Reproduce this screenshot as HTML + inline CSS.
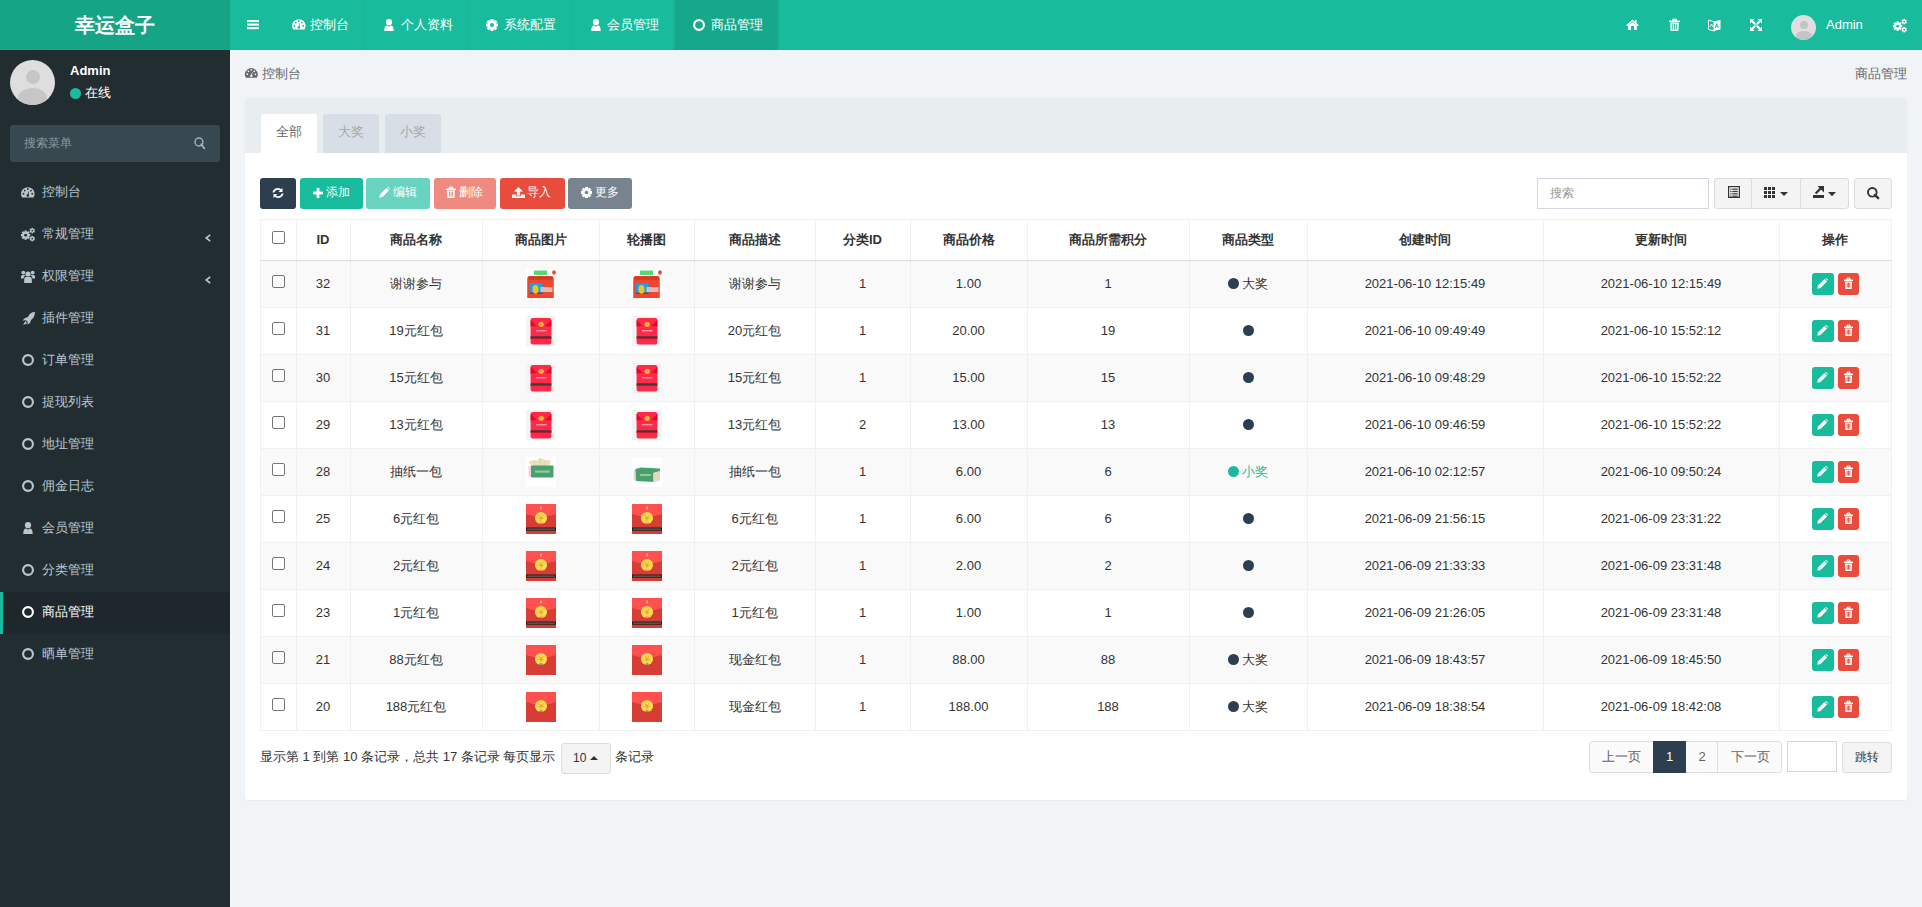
<!DOCTYPE html>
<html><head><meta charset="utf-8"><style>
*{box-sizing:border-box;margin:0;padding:0}
html,body{width:1922px;height:907px;overflow:hidden}
body{font-family:"Liberation Sans",sans-serif;font-size:13px;color:#333;background:#f1f4f6;position:relative}
.abs{position:absolute}
.t{white-space:nowrap}
svg{display:block;overflow:visible}
.cb{width:13px;height:13px;border:1px solid #767676;border-radius:2px;background:#fff}
.img{width:30px;height:30px}
</style></head><body>
<div class="abs" style="left:0;top:0;width:230px;height:50px;background:#16a487"></div>
<div class="abs" style="left:0;top:0;width:230px;height:50px;line-height:50px;text-align:center;color:#fff;font-size:20px;font-weight:bold">幸运盒子</div>
<div class="abs" style="left:230px;top:0;width:1692px;height:50px;background:#18bc9c"></div>
<svg class="abs" style="left:247px;top:20px" width="12" height="9.2" viewBox="0 0 12 9.2"><rect x="0" y="0" width="12" height="2.1" fill="#fff"/><rect x="0" y="3.55" width="12" height="2.1" fill="#fff"/><rect x="0" y="7.1" width="12" height="2.1" fill="#fff"/></svg>
<div class="abs" style="left:364px;top:0;width:1px;height:50px;background:#17b194"></div>
<div class="abs" style="left:468px;top:0;width:1px;height:50px;background:#17b194"></div>
<div class="abs" style="left:571px;top:0;width:1px;height:50px;background:#17b194"></div>
<div class="abs" style="left:674px;top:0;width:1px;height:50px;background:#17b194"></div>
<div class="abs" style="left:778px;top:0;width:1px;height:50px;background:#17b194"></div>
<div class="abs" style="left:675px;top:0;width:103px;height:50px;background:#17a88b"></div>
<svg class="abs" style="left:291.5px;top:19.4px" width="14" height="11" viewBox="0 0 14 11"><g transform="scale(1.0)"><path d="M1.03 10.6 A6.8 6.8 0 1 1 12.57 10.6 Z" fill="#fff"/><circle cx="2.5" cy="6.7" r="0.95" fill="#18bc9c"/><circle cx="3.7" cy="3.6" r="0.95" fill="#18bc9c"/><circle cx="6.8" cy="2" r="0.95" fill="#18bc9c"/><circle cx="9.9" cy="3.6" r="0.95" fill="#18bc9c"/><circle cx="11.2" cy="6.8" r="0.95" fill="#18bc9c"/><path d="M6.3 8.4 L7.6 4.2 L8.1 4.3 L7.4 8.6 Z" fill="#18bc9c"/><circle cx="6.8" cy="8.5" r="1.3" fill="#18bc9c"/></g></svg>
<div class="abs t" style="left:310px;top:0px;line-height:50px;color:#fff">控制台</div>
<svg class="abs" style="left:384px;top:19px" width="10" height="12" viewBox="0 0 10 12"><circle cx="5.0" cy="3.2" r="3.1" fill="#fff"/><path d="M0.3 12 C0.3 8 1.5 6.8 3.2 6.6 Q5.0 8.6 6.8 6.6 C8.5 6.8 9.7 8 9.7 12 Z" fill="#fff"/></svg>
<div class="abs t" style="left:401px;top:0px;line-height:50px;color:#fff">个人资料</div>
<svg class="abs" style="left:486px;top:19px" width="12" height="12" viewBox="0 0 12 12"><rect x="4.5" y="0.0" width="3" height="3" fill="#fff" transform="rotate(0 6.0 6.0)"/><rect x="4.5" y="0.0" width="3" height="3" fill="#fff" transform="rotate(45 6.0 6.0)"/><rect x="4.5" y="0.0" width="3" height="3" fill="#fff" transform="rotate(90 6.0 6.0)"/><rect x="4.5" y="0.0" width="3" height="3" fill="#fff" transform="rotate(135 6.0 6.0)"/><rect x="4.5" y="0.0" width="3" height="3" fill="#fff" transform="rotate(180 6.0 6.0)"/><rect x="4.5" y="0.0" width="3" height="3" fill="#fff" transform="rotate(225 6.0 6.0)"/><rect x="4.5" y="0.0" width="3" height="3" fill="#fff" transform="rotate(270 6.0 6.0)"/><rect x="4.5" y="0.0" width="3" height="3" fill="#fff" transform="rotate(315 6.0 6.0)"/><circle cx="6.0" cy="6.0" r="4.4" fill="#fff"/><circle cx="6.0" cy="6.0" r="2.0" fill="#18bc9c"/></svg>
<div class="abs t" style="left:504px;top:0px;line-height:50px;color:#fff">系统配置</div>
<svg class="abs" style="left:591px;top:19px" width="10" height="12" viewBox="0 0 10 12"><circle cx="5.0" cy="3.2" r="3.1" fill="#fff"/><path d="M0.3 12 C0.3 8 1.5 6.8 3.2 6.6 Q5.0 8.6 6.8 6.6 C8.5 6.8 9.7 8 9.7 12 Z" fill="#fff"/></svg>
<div class="abs t" style="left:607px;top:0px;line-height:50px;color:#fff">会员管理</div>
<svg class="abs" style="left:693px;top:19px" width="12" height="12" viewBox="0 0 12 12"><circle cx="6.0" cy="6.0" r="4.9" fill="none" stroke="#fff" stroke-width="2.1"/></svg>
<div class="abs t" style="left:711px;top:0px;line-height:50px;color:#fff">商品管理</div>
<svg class="abs" style="left:1626px;top:19px" width="13" height="11" viewBox="0 0 13 11"><path d="M6.5 0.5 L0.3 6.2 L1.3 7.2 L6.5 2.3 L11.7 7.2 L12.7 6.2 L10.5 4.3 L10.5 1 L9 1 L9 3 Z" fill="#fff"/><path d="M2.2 6.5 L6.5 2.9 L10.8 6.5 L10.8 11 L8.0 11 L8.0 7 L5.0 7 L5.0 11 L2.2 11 Z" fill="#fff"/></svg>
<svg class="abs" style="left:1669px;top:19px" width="11" height="12" viewBox="0 0 11 12"><path d="M3.52 1.5 Q3.52 0 4.95 0 L6.050000000000001 0 Q7.48 0 7.48 1.5 Z" fill="none" stroke="#fff" stroke-width="1.2"/><rect x="0" y="1.6" width="11" height="1.4" fill="#fff"/><path d="M1.1 3.4 L9.9 3.4 L9.35 12 L1.65 12 Z" fill="#fff"/><rect x="3.3" y="4.6" width="0.9" height="6" fill="#18bc9c"/><rect x="5.05" y="4.6" width="0.9" height="6" fill="#18bc9c"/><rect x="6.799999999999999" y="4.6" width="0.9" height="6" fill="#18bc9c"/></svg>
<svg class="abs" style="left:1708px;top:19px" width="13" height="13" viewBox="0 0 13 13"><path d="M0.5 1 L6.5 3 L6.5 12 L0.5 10.5 Z" fill="none" stroke="#fff" stroke-width="1"/><path d="M5.5 2.5 L12.5 1 L12.5 10.5 L5.5 12 Z" fill="#fff"/><path d="M2 8 L3.5 5 L5 8" fill="none" stroke="#fff" stroke-width="0.9"/><path d="M7.3 9 L8.8 4.5 L10.3 9 M7.9 7.5 L9.7 7.5" fill="none" stroke="#18bc9c" stroke-width="0.9"/></svg>
<svg class="abs" style="left:1750px;top:19px" width="12" height="12" viewBox="0 0 12 12"><path d="M0 0 L4.5 0 L3 1.5 L5.5 4 L4 5.5 L1.5 3 L0 4.5 Z" fill="#fff"/><path d="M12 0 L7.5 0 L9 1.5 L6.5 4 L8 5.5 L10.5 3 L12 4.5 Z" fill="#fff"/><path d="M0 12 L4.5 12 L3 10.5 L5.5 8 L4 6.5 L1.5 9 L0 7.5 Z" fill="#fff"/><path d="M12 12 L7.5 12 L9 10.5 L6.5 8 L8 6.5 L10.5 9 L12 7.5 Z" fill="#fff"/><path d="M3.5 2.5 L9.5 8.5 L8.5 9.5 L2.5 3.5 Z M8.5 2.5 L2.5 8.5 L3.5 9.5 L9.5 3.5 Z" fill="#fff"/></svg>
<div class="abs" style="left:1791px;top:15px;width:25px;height:25px;border-radius:50%;background:#e0dede;overflow:hidden"><div class="abs" style="left:8.5px;top:6px;width:8px;height:8px;border-radius:50%;background:#c4c4c4"></div><div class="abs" style="left:4.5px;top:16px;width:16px;height:10px;border-radius:50%;background:#c4c4c4"></div></div>
<div class="abs t" style="left:1826px;top:0px;line-height:50px;color:#fff">Admin</div>
<svg class="abs" style="left:1893px;top:19px" width="14" height="13" viewBox="0 0 14 13"><rect x="3.52" y="2.4700000000000006" width="2.2" height="2.64" fill="#fff" transform="rotate(0.0 4.62 7.15)"/><rect x="3.52" y="2.4700000000000006" width="2.2" height="2.64" fill="#fff" transform="rotate(45.0 4.62 7.15)"/><rect x="3.52" y="2.4700000000000006" width="2.2" height="2.64" fill="#fff" transform="rotate(90.0 4.62 7.15)"/><rect x="3.52" y="2.4700000000000006" width="2.2" height="2.64" fill="#fff" transform="rotate(135.0 4.62 7.15)"/><rect x="3.52" y="2.4700000000000006" width="2.2" height="2.64" fill="#fff" transform="rotate(180.0 4.62 7.15)"/><rect x="3.52" y="2.4700000000000006" width="2.2" height="2.64" fill="#fff" transform="rotate(225.0 4.62 7.15)"/><rect x="3.52" y="2.4700000000000006" width="2.2" height="2.64" fill="#fff" transform="rotate(270.0 4.62 7.15)"/><rect x="3.52" y="2.4700000000000006" width="2.2" height="2.64" fill="#fff" transform="rotate(315.0 4.62 7.15)"/><circle cx="4.62" cy="7.15" r="3.36" fill="#fff"/><circle cx="4.62" cy="7.15" r="1.4000000000000001" fill="#18bc9c"/><rect x="10.4" y="-0.17999999999999994" width="1.6" height="1.92" fill="#fff" transform="rotate(0.0 11.200000000000001 2.6)"/><rect x="10.4" y="-0.17999999999999994" width="1.6" height="1.92" fill="#fff" transform="rotate(60.0 11.200000000000001 2.6)"/><rect x="10.4" y="-0.17999999999999994" width="1.6" height="1.92" fill="#fff" transform="rotate(120.0 11.200000000000001 2.6)"/><rect x="10.4" y="-0.17999999999999994" width="1.6" height="1.92" fill="#fff" transform="rotate(180.0 11.200000000000001 2.6)"/><rect x="10.4" y="-0.17999999999999994" width="1.6" height="1.92" fill="#fff" transform="rotate(240.0 11.200000000000001 2.6)"/><rect x="10.4" y="-0.17999999999999994" width="1.6" height="1.92" fill="#fff" transform="rotate(300.0 11.200000000000001 2.6)"/><circle cx="11.200000000000001" cy="2.6" r="1.82" fill="#fff"/><circle cx="11.200000000000001" cy="2.6" r="0.84" fill="#18bc9c"/><rect x="10.4" y="7.88" width="1.6" height="1.92" fill="#fff" transform="rotate(0.0 11.200000000000001 10.66)"/><rect x="10.4" y="7.88" width="1.6" height="1.92" fill="#fff" transform="rotate(60.0 11.200000000000001 10.66)"/><rect x="10.4" y="7.88" width="1.6" height="1.92" fill="#fff" transform="rotate(120.0 11.200000000000001 10.66)"/><rect x="10.4" y="7.88" width="1.6" height="1.92" fill="#fff" transform="rotate(180.0 11.200000000000001 10.66)"/><rect x="10.4" y="7.88" width="1.6" height="1.92" fill="#fff" transform="rotate(240.0 11.200000000000001 10.66)"/><rect x="10.4" y="7.88" width="1.6" height="1.92" fill="#fff" transform="rotate(300.0 11.200000000000001 10.66)"/><circle cx="11.200000000000001" cy="10.66" r="1.82" fill="#fff"/><circle cx="11.200000000000001" cy="10.66" r="0.84" fill="#18bc9c"/></svg>
<div class="abs" style="left:0;top:50px;width:230px;height:857px;background:#222d32"></div>
<div class="abs" style="left:10px;top:60px;width:45px;height:45px;border-radius:50%;background:#dedede;overflow:hidden"><div class="abs" style="left:15.5px;top:10px;width:14px;height:14px;border-radius:50%;background:#c6c6c6"></div><div class="abs" style="left:8px;top:28px;width:29px;height:20px;border-radius:50%;background:#c6c6c6"></div></div>
<div class="abs t" style="left:70px;top:62px;font-weight:bold;color:#fff;line-height:18px">Admin</div>
<div class="abs" style="left:70px;top:88px;width:11px;height:11px;border-radius:50%;background:#18bc9c"></div>
<div class="abs t" style="left:85px;top:84px;color:#fff;line-height:18px">在线</div>
<div class="abs" style="left:10px;top:125px;width:210px;height:37px;border-radius:3px;background:#374850"></div>
<div class="abs t" style="left:24px;top:134px;color:#8a9aa2;font-size:12px;line-height:18px">搜索菜单</div>
<svg class="abs" style="left:194px;top:137px" width="11" height="12" viewBox="0 0 11 12"><circle cx="4.96" cy="4.96" r="3.96" fill="none" stroke="#a4b0b6" stroke-width="1.5"/><path d="M7.336 7.336 L10.2 11.2" stroke="#a4b0b6" stroke-width="1.9" stroke-linecap="round"/></svg>
<svg class="abs" style="left:21.0px;top:186.5px" width="14" height="11" viewBox="0 0 14 11"><g transform="scale(1.0)"><path d="M1.03 10.6 A6.8 6.8 0 1 1 12.57 10.6 Z" fill="#b8c7ce"/><circle cx="2.5" cy="6.7" r="0.95" fill="#222d32"/><circle cx="3.7" cy="3.6" r="0.95" fill="#222d32"/><circle cx="6.8" cy="2" r="0.95" fill="#222d32"/><circle cx="9.9" cy="3.6" r="0.95" fill="#222d32"/><circle cx="11.2" cy="6.8" r="0.95" fill="#222d32"/><path d="M6.3 8.4 L7.6 4.2 L8.1 4.3 L7.4 8.6 Z" fill="#222d32"/><circle cx="6.8" cy="8.5" r="1.3" fill="#222d32"/></g></svg>
<div class="abs t" style="left:42px;top:171px;line-height:42px;color:#b8c7ce">控制台</div>
<svg class="abs" style="left:21.0px;top:227.5px" width="14" height="13" viewBox="0 0 14 13"><rect x="3.52" y="2.4700000000000006" width="2.2" height="2.64" fill="#b8c7ce" transform="rotate(0.0 4.62 7.15)"/><rect x="3.52" y="2.4700000000000006" width="2.2" height="2.64" fill="#b8c7ce" transform="rotate(45.0 4.62 7.15)"/><rect x="3.52" y="2.4700000000000006" width="2.2" height="2.64" fill="#b8c7ce" transform="rotate(90.0 4.62 7.15)"/><rect x="3.52" y="2.4700000000000006" width="2.2" height="2.64" fill="#b8c7ce" transform="rotate(135.0 4.62 7.15)"/><rect x="3.52" y="2.4700000000000006" width="2.2" height="2.64" fill="#b8c7ce" transform="rotate(180.0 4.62 7.15)"/><rect x="3.52" y="2.4700000000000006" width="2.2" height="2.64" fill="#b8c7ce" transform="rotate(225.0 4.62 7.15)"/><rect x="3.52" y="2.4700000000000006" width="2.2" height="2.64" fill="#b8c7ce" transform="rotate(270.0 4.62 7.15)"/><rect x="3.52" y="2.4700000000000006" width="2.2" height="2.64" fill="#b8c7ce" transform="rotate(315.0 4.62 7.15)"/><circle cx="4.62" cy="7.15" r="3.36" fill="#b8c7ce"/><circle cx="4.62" cy="7.15" r="1.4000000000000001" fill="#222d32"/><rect x="10.4" y="-0.17999999999999994" width="1.6" height="1.92" fill="#b8c7ce" transform="rotate(0.0 11.200000000000001 2.6)"/><rect x="10.4" y="-0.17999999999999994" width="1.6" height="1.92" fill="#b8c7ce" transform="rotate(60.0 11.200000000000001 2.6)"/><rect x="10.4" y="-0.17999999999999994" width="1.6" height="1.92" fill="#b8c7ce" transform="rotate(120.0 11.200000000000001 2.6)"/><rect x="10.4" y="-0.17999999999999994" width="1.6" height="1.92" fill="#b8c7ce" transform="rotate(180.0 11.200000000000001 2.6)"/><rect x="10.4" y="-0.17999999999999994" width="1.6" height="1.92" fill="#b8c7ce" transform="rotate(240.0 11.200000000000001 2.6)"/><rect x="10.4" y="-0.17999999999999994" width="1.6" height="1.92" fill="#b8c7ce" transform="rotate(300.0 11.200000000000001 2.6)"/><circle cx="11.200000000000001" cy="2.6" r="1.82" fill="#b8c7ce"/><circle cx="11.200000000000001" cy="2.6" r="0.84" fill="#222d32"/><rect x="10.4" y="7.88" width="1.6" height="1.92" fill="#b8c7ce" transform="rotate(0.0 11.200000000000001 10.66)"/><rect x="10.4" y="7.88" width="1.6" height="1.92" fill="#b8c7ce" transform="rotate(60.0 11.200000000000001 10.66)"/><rect x="10.4" y="7.88" width="1.6" height="1.92" fill="#b8c7ce" transform="rotate(120.0 11.200000000000001 10.66)"/><rect x="10.4" y="7.88" width="1.6" height="1.92" fill="#b8c7ce" transform="rotate(180.0 11.200000000000001 10.66)"/><rect x="10.4" y="7.88" width="1.6" height="1.92" fill="#b8c7ce" transform="rotate(240.0 11.200000000000001 10.66)"/><rect x="10.4" y="7.88" width="1.6" height="1.92" fill="#b8c7ce" transform="rotate(300.0 11.200000000000001 10.66)"/><circle cx="11.200000000000001" cy="10.66" r="1.82" fill="#b8c7ce"/><circle cx="11.200000000000001" cy="10.66" r="0.84" fill="#222d32"/></svg>
<div class="abs t" style="left:42px;top:213px;line-height:42px;color:#b8c7ce">常规管理</div>
<svg class="abs" style="left:205px;top:233.5px" width="6" height="8" viewBox="0 0 6 8"><path d="M5.2 0.8 L1.2 4.0 L5.2 7.2" fill="none" stroke="#b8c7ce" stroke-width="1.7"/></svg>
<svg class="abs" style="left:21.0px;top:269.5px" width="14" height="13" viewBox="0 0 14 13"><circle cx="7.0" cy="4" r="2.6" fill="#b8c7ce"/><path d="M3.2 13 L3.2 9 Q3.2 7 5 7 L9 7 Q10.8 7 10.8 9 L10.8 13 Z" fill="#b8c7ce"/><circle cx="2.3" cy="2.6" r="1.9" fill="#b8c7ce"/><circle cx="11.7" cy="2.6" r="1.9" fill="#b8c7ce"/><path d="M0 8.5 L0 6.5 Q0 5 1.5 5 L4.5 5 L3 6.8 L2.5 8.5 Z" fill="#b8c7ce"/><path d="M14 8.5 L14 6.5 Q14 5 12.5 5 L9.5 5 L11 6.8 L11.5 8.5 Z" fill="#b8c7ce"/></svg>
<div class="abs t" style="left:42px;top:255px;line-height:42px;color:#b8c7ce">权限管理</div>
<svg class="abs" style="left:205px;top:275.5px" width="6" height="8" viewBox="0 0 6 8"><path d="M5.2 0.8 L1.2 4.0 L5.2 7.2" fill="none" stroke="#b8c7ce" stroke-width="1.7"/></svg>
<svg class="abs" style="left:21.5px;top:311.5px" width="13" height="13" viewBox="0 0 13 13"><path d="M13 0 Q8 0 6 5 L3 6 L0.5 8.5 L4 8.3 L5.7 10 L5.5 12.5 L8 11 L9 8 Q13 5 13 0 Z" fill="#b8c7ce"/><path d="M3.5 9 L1 13 L5 11.5 Z" fill="#b8c7ce"/></svg>
<div class="abs t" style="left:42px;top:297px;line-height:42px;color:#b8c7ce">插件管理</div>
<svg class="abs" style="left:22.0px;top:354.0px" width="12" height="12" viewBox="0 0 12 12"><circle cx="6.0" cy="6.0" r="4.9" fill="none" stroke="#b8c7ce" stroke-width="2.1"/></svg>
<div class="abs t" style="left:42px;top:339px;line-height:42px;color:#b8c7ce">订单管理</div>
<svg class="abs" style="left:22.0px;top:396.0px" width="12" height="12" viewBox="0 0 12 12"><circle cx="6.0" cy="6.0" r="4.9" fill="none" stroke="#b8c7ce" stroke-width="2.1"/></svg>
<div class="abs t" style="left:42px;top:381px;line-height:42px;color:#b8c7ce">提现列表</div>
<svg class="abs" style="left:22.0px;top:438.0px" width="12" height="12" viewBox="0 0 12 12"><circle cx="6.0" cy="6.0" r="4.9" fill="none" stroke="#b8c7ce" stroke-width="2.1"/></svg>
<div class="abs t" style="left:42px;top:423px;line-height:42px;color:#b8c7ce">地址管理</div>
<svg class="abs" style="left:22.0px;top:480.0px" width="12" height="12" viewBox="0 0 12 12"><circle cx="6.0" cy="6.0" r="4.9" fill="none" stroke="#b8c7ce" stroke-width="2.1"/></svg>
<div class="abs t" style="left:42px;top:465px;line-height:42px;color:#b8c7ce">佣金日志</div>
<svg class="abs" style="left:23.0px;top:522.0px" width="10" height="12" viewBox="0 0 10 12"><circle cx="5.0" cy="3.2" r="3.1" fill="#b8c7ce"/><path d="M0.3 12 C0.3 8 1.5 6.8 3.2 6.6 Q5.0 8.6 6.8 6.6 C8.5 6.8 9.7 8 9.7 12 Z" fill="#b8c7ce"/></svg>
<div class="abs t" style="left:42px;top:507px;line-height:42px;color:#b8c7ce">会员管理</div>
<svg class="abs" style="left:22.0px;top:564.0px" width="12" height="12" viewBox="0 0 12 12"><circle cx="6.0" cy="6.0" r="4.9" fill="none" stroke="#b8c7ce" stroke-width="2.1"/></svg>
<div class="abs t" style="left:42px;top:549px;line-height:42px;color:#b8c7ce">分类管理</div>
<div class="abs" style="left:0;top:592px;width:230px;height:42px;background:#1e282c"></div>
<div class="abs" style="left:0;top:592px;width:3px;height:42px;background:#18bc9c"></div>
<svg class="abs" style="left:22.0px;top:606.0px" width="12" height="12" viewBox="0 0 12 12"><circle cx="6.0" cy="6.0" r="4.9" fill="none" stroke="#fff" stroke-width="2.1"/></svg>
<div class="abs t" style="left:42px;top:591px;line-height:42px;color:#fff">商品管理</div>
<svg class="abs" style="left:22.0px;top:648.0px" width="12" height="12" viewBox="0 0 12 12"><circle cx="6.0" cy="6.0" r="4.9" fill="none" stroke="#b8c7ce" stroke-width="2.1"/></svg>
<div class="abs t" style="left:42px;top:633px;line-height:42px;color:#b8c7ce">晒单管理</div>
<div class="abs" style="left:230px;top:50px;width:1px;height:857px;background:#f7f9fa"></div>
<svg class="abs" style="left:245px;top:68px" width="13" height="10" viewBox="0 0 13 10"><g transform="scale(0.9285714285714286)"><path d="M1.03 10.6 A6.8 6.8 0 1 1 12.57 10.6 Z" fill="#666"/><circle cx="2.5" cy="6.7" r="0.95" fill="#f1f4f6"/><circle cx="3.7" cy="3.6" r="0.95" fill="#f1f4f6"/><circle cx="6.8" cy="2" r="0.95" fill="#f1f4f6"/><circle cx="9.9" cy="3.6" r="0.95" fill="#f1f4f6"/><circle cx="11.2" cy="6.8" r="0.95" fill="#f1f4f6"/><path d="M6.3 8.4 L7.6 4.2 L8.1 4.3 L7.4 8.6 Z" fill="#f1f4f6"/><circle cx="6.8" cy="8.5" r="1.3" fill="#f1f4f6"/></g></svg>
<div class="abs t" style="left:262px;top:64.5px;color:#666;line-height:18px">控制台</div>
<div class="abs t" style="left:1855px;top:64.5px;color:#666;line-height:18px">商品管理</div>
<div class="abs" style="left:245px;top:98px;width:1662px;height:702px;background:#fff;border-radius:3px;box-shadow:0 1px 1px rgba(0,0,0,0.05)"></div>
<div class="abs" style="left:245px;top:98px;width:1662px;height:55px;background:#e8edf0;border-radius:3px 3px 0 0"></div>
<div class="abs" style="left:261px;top:114px;width:56px;height:39px;background:#fff;border-radius:3px 3px 0 0;line-height:36px;text-align:center;color:#666">全部</div>
<div class="abs" style="left:323px;top:114px;width:56px;height:39px;background:#d8dee5;border-radius:3px 3px 0 0;line-height:36px;text-align:center;color:#a3a9ae">大奖</div>
<div class="abs" style="left:385px;top:114px;width:56px;height:39px;background:#d8dee5;border-radius:3px 3px 0 0;line-height:36px;text-align:center;color:#a3a9ae">小奖</div>
<div class="abs" style="left:260px;top:178px;width:36px;height:31px;background:#2c3e50;opacity:1.0;border-radius:3px"></div>
<div class="abs" style="left:300px;top:178px;width:63px;height:31px;background:#18bc9c;opacity:1.0;border-radius:3px"></div>
<div class="abs" style="left:366px;top:178px;width:64px;height:31px;background:#18bc9c;opacity:0.65;border-radius:3px"></div>
<div class="abs" style="left:434px;top:178px;width:62px;height:31px;background:#e74c3c;opacity:0.65;border-radius:3px"></div>
<div class="abs" style="left:500px;top:178px;width:65px;height:31px;background:#e74c3c;opacity:1.0;border-radius:3px"></div>
<div class="abs" style="left:568px;top:178px;width:64px;height:31px;background:#77838f;opacity:1.0;border-radius:3px"></div>
<svg class="abs" style="left:272px;top:187px" width="12" height="12" viewBox="0 0 12 12"><path d="M10.5 1 L10.5 5 L6.5 5 L8 3.6 Q6.0 1.8 3.4 3.8 Q2.5 4.8 2.2 5.6 L0.4 5.6 Q1 3 3 1.8 Q6.0 0 9 2.2 Z" fill="#fff"/><path d="M1.5 11 L1.5 7 L5.5 7 L4 8.4 Q6.0 10.2 8.6 8.2 Q9.5 7.2 9.8 6.4 L11.6 6.4 Q11 9 9 10.2 Q6.0 12 3 9.8 Z" fill="#fff"/></svg>
<div class="abs t" style="left:326px;top:183px;line-height:18px;color:#fff;font-size:12px">添加</div>
<div class="abs t" style="left:393px;top:183px;line-height:18px;color:#fff;font-size:12px">编辑</div>
<div class="abs t" style="left:459px;top:183px;line-height:18px;color:#fff;font-size:12px">删除</div>
<div class="abs t" style="left:527px;top:183px;line-height:18px;color:#fff;font-size:12px">导入</div>
<div class="abs t" style="left:595px;top:183px;line-height:18px;color:#fff;font-size:12px">更多</div>
<svg class="abs" style="left:313px;top:188px" width="10" height="10" viewBox="0 0 10 10"><rect x="3.6" y="0" width="2.8" height="10" fill="#fff"/><rect x="0" y="3.6" width="10" height="2.8" fill="#fff"/></svg>
<svg class="abs" style="left:379px;top:187px" width="11" height="11" viewBox="0 0 11 11"><path d="M0.3 10.7 L1 7.5 L7.5 1 L10 3.5 L3.5 10 Z" fill="#fff"/><path d="M8.2 0.3 Q9 -0.3 9.8 0.5 L10.5 1.2 Q11.2 2 10.7 2.8 Z" fill="#fff"/></svg>
<svg class="abs" style="left:446px;top:187px" width="10" height="11" viewBox="0 0 10 11"><path d="M3.2 1.5 Q3.2 0 4.5 0 L5.5 0 Q6.800000000000001 0 6.800000000000001 1.5 Z" fill="none" stroke="#fff" stroke-width="1.2"/><rect x="0" y="1.6" width="10" height="1.4" fill="#fff"/><path d="M1.0 3.4 L9.0 3.4 L8.5 11 L1.5 11 Z" fill="#fff"/><rect x="3.0" y="4.6" width="0.9" height="5" fill="#ef8b80"/><rect x="4.55" y="4.6" width="0.9" height="5" fill="#ef8b80"/><rect x="6.1" y="4.6" width="0.9" height="5" fill="#ef8b80"/></svg>
<svg class="abs" style="left:512px;top:187px" width="13" height="11" viewBox="0 0 13 11"><path d="M6.5 0 L11 4.5 L8.1 4.5 L8.1 8.5 L4.9 8.5 L4.9 4.5 L2 4.5 Z" fill="#fff"/><path d="M0 7.5 L4.1 7.5 L4.1 9.3 L8.9 9.3 L8.9 7.5 L13 7.5 L13 11 L0 11 Z" fill="#fff"/></svg>
<svg class="abs" style="left:581px;top:187px" width="11" height="11" viewBox="0 0 11 11"><rect x="4.0" y="0.0" width="3" height="3" fill="#fff" transform="rotate(0 5.5 5.5)"/><rect x="4.0" y="0.0" width="3" height="3" fill="#fff" transform="rotate(45 5.5 5.5)"/><rect x="4.0" y="0.0" width="3" height="3" fill="#fff" transform="rotate(90 5.5 5.5)"/><rect x="4.0" y="0.0" width="3" height="3" fill="#fff" transform="rotate(135 5.5 5.5)"/><rect x="4.0" y="0.0" width="3" height="3" fill="#fff" transform="rotate(180 5.5 5.5)"/><rect x="4.0" y="0.0" width="3" height="3" fill="#fff" transform="rotate(225 5.5 5.5)"/><rect x="4.0" y="0.0" width="3" height="3" fill="#fff" transform="rotate(270 5.5 5.5)"/><rect x="4.0" y="0.0" width="3" height="3" fill="#fff" transform="rotate(315 5.5 5.5)"/><circle cx="5.5" cy="5.5" r="3.9" fill="#fff"/><circle cx="5.5" cy="5.5" r="1.8333333333333333" fill="#77838f"/></svg>
<div class="abs" style="left:1537px;top:178px;width:172px;height:31px;border:1px solid #d2d6de;background:#fff"></div>
<div class="abs t" style="left:1550px;top:184px;color:#999;font-size:12px;line-height:18px">搜索</div>
<div class="abs" style="left:1714px;top:178px;width:135px;height:31px;border:1px solid #dcdcdc;border-radius:3px;background:#f4f4f4"></div>
<div class="abs" style="left:1751px;top:178px;width:1px;height:31px;background:#dcdcdc"></div>
<div class="abs" style="left:1800px;top:178px;width:1px;height:31px;background:#dcdcdc"></div>
<svg class="abs" style="left:1728px;top:186px" width="12" height="12" viewBox="0 0 12 12"><rect x="0.6" y="0.6" width="10.8" height="10.8" fill="none" stroke="#333" stroke-width="1.2"/><rect x="2.3" y="2.6" width="1.2" height="1.2" fill="#333"/><rect x="4.3" y="2.6" width="5.4" height="1.2" fill="#333"/><rect x="2.3" y="4.9" width="1.2" height="1.2" fill="#333"/><rect x="4.3" y="4.9" width="5.4" height="1.2" fill="#333"/><rect x="2.3" y="7.199999999999999" width="1.2" height="1.2" fill="#333"/><rect x="4.3" y="7.199999999999999" width="5.4" height="1.2" fill="#333"/><rect x="2.3" y="9.5" width="1.2" height="1.2" fill="#333"/><rect x="4.3" y="9.5" width="5.4" height="1.2" fill="#333"/></svg>
<svg class="abs" style="left:1764px;top:187px" width="11" height="11" viewBox="0 0 11 11"><rect x="0" y="0" width="3" height="3" fill="#333"/><rect x="0" y="4" width="3" height="3" fill="#333"/><rect x="0" y="8" width="3" height="3" fill="#333"/><rect x="4" y="0" width="3" height="3" fill="#333"/><rect x="4" y="4" width="3" height="3" fill="#333"/><rect x="4" y="8" width="3" height="3" fill="#333"/><rect x="8" y="0" width="3" height="3" fill="#333"/><rect x="8" y="4" width="3" height="3" fill="#333"/><rect x="8" y="8" width="3" height="3" fill="#333"/></svg>
<svg class="abs" style="left:1780px;top:192px" width="8" height="4" viewBox="0 0 8 4"><path d="M0 0 L8 0 L4.0 4 Z" fill="#333"/></svg>
<svg class="abs" style="left:1813px;top:186px" width="12" height="12" viewBox="0 0 12 12"><rect x="0" y="9" width="11" height="3" fill="#333"/><path d="M11 0 L11 6.5 L4.5 0 Z" fill="#333"/><path d="M2.6 7.6 L7.8 2.2" stroke="#333" stroke-width="2.2"/></svg>
<svg class="abs" style="left:1828px;top:192px" width="8" height="4.3" viewBox="0 0 8 4.3"><path d="M0 0 L8 0 L4.0 4.3 Z" fill="#333"/></svg>
<div class="abs" style="left:1854px;top:178px;width:38px;height:31px;border:1px solid #dcdcdc;border-radius:3px;background:#f4f4f4"></div>
<svg class="abs" style="left:1867px;top:187px" width="12" height="12" viewBox="0 0 12 12"><circle cx="5.32" cy="5.32" r="4.32" fill="none" stroke="#333" stroke-width="1.9"/><path d="M7.912000000000001 7.912000000000001 L11.2 11.2" stroke="#333" stroke-width="2.4" stroke-linecap="round"/></svg>
<div class="abs" style="left:260px;top:219px;width:1632px;height:512px;border:1px solid #f0f0f0"></div>
<div class="abs" style="left:296px;top:219px;width:54px;height:41px;line-height:41px;text-align:center;font-weight:bold;color:#333">ID</div>
<div class="abs" style="left:350px;top:219px;width:132px;height:41px;line-height:41px;text-align:center;font-weight:bold;color:#333">商品名称</div>
<div class="abs" style="left:482px;top:219px;width:117px;height:41px;line-height:41px;text-align:center;font-weight:bold;color:#333">商品图片</div>
<div class="abs" style="left:599px;top:219px;width:95px;height:41px;line-height:41px;text-align:center;font-weight:bold;color:#333">轮播图</div>
<div class="abs" style="left:694px;top:219px;width:121px;height:41px;line-height:41px;text-align:center;font-weight:bold;color:#333">商品描述</div>
<div class="abs" style="left:815px;top:219px;width:95px;height:41px;line-height:41px;text-align:center;font-weight:bold;color:#333">分类ID</div>
<div class="abs" style="left:910px;top:219px;width:117px;height:41px;line-height:41px;text-align:center;font-weight:bold;color:#333">商品价格</div>
<div class="abs" style="left:1027px;top:219px;width:162px;height:41px;line-height:41px;text-align:center;font-weight:bold;color:#333">商品所需积分</div>
<div class="abs" style="left:1189px;top:219px;width:118px;height:41px;line-height:41px;text-align:center;font-weight:bold;color:#333">商品类型</div>
<div class="abs" style="left:1307px;top:219px;width:236px;height:41px;line-height:41px;text-align:center;font-weight:bold;color:#333">创建时间</div>
<div class="abs" style="left:1543px;top:219px;width:236px;height:41px;line-height:41px;text-align:center;font-weight:bold;color:#333">更新时间</div>
<div class="abs" style="left:1779px;top:219px;width:112px;height:41px;line-height:41px;text-align:center;font-weight:bold;color:#333">操作</div>
<div class="abs" style="left:260px;top:260px;width:1632px;height:1px;background:#dddddd"></div>
<div class="abs cb" style="left:272px;top:231px"></div>
<div class="abs" style="left:261px;top:261px;width:1630px;height:46px;background:#f9f9f9"></div>
<div class="abs" style="left:261px;top:307px;width:1630px;height:47px;background:#fff;border-top:1px solid #f0f0f0"></div>
<div class="abs" style="left:261px;top:354px;width:1630px;height:47px;background:#f9f9f9;border-top:1px solid #f0f0f0"></div>
<div class="abs" style="left:261px;top:401px;width:1630px;height:47px;background:#fff;border-top:1px solid #f0f0f0"></div>
<div class="abs" style="left:261px;top:448px;width:1630px;height:47px;background:#f9f9f9;border-top:1px solid #f0f0f0"></div>
<div class="abs" style="left:261px;top:495px;width:1630px;height:47px;background:#fff;border-top:1px solid #f0f0f0"></div>
<div class="abs" style="left:261px;top:542px;width:1630px;height:47px;background:#f9f9f9;border-top:1px solid #f0f0f0"></div>
<div class="abs" style="left:261px;top:589px;width:1630px;height:47px;background:#fff;border-top:1px solid #f0f0f0"></div>
<div class="abs" style="left:261px;top:636px;width:1630px;height:47px;background:#f9f9f9;border-top:1px solid #f0f0f0"></div>
<div class="abs" style="left:261px;top:683px;width:1630px;height:47px;background:#fff;border-top:1px solid #f0f0f0"></div>
<div class="abs" style="left:296px;top:219px;width:1px;height:41px;background:#f0f0f0"></div><div class="abs" style="left:296px;top:261px;width:1px;height:470px;background:#f0f0f0"></div>
<div class="abs" style="left:350px;top:219px;width:1px;height:41px;background:#f0f0f0"></div><div class="abs" style="left:350px;top:261px;width:1px;height:470px;background:#f0f0f0"></div>
<div class="abs" style="left:482px;top:219px;width:1px;height:41px;background:#f0f0f0"></div><div class="abs" style="left:482px;top:261px;width:1px;height:470px;background:#f0f0f0"></div>
<div class="abs" style="left:599px;top:219px;width:1px;height:41px;background:#f0f0f0"></div><div class="abs" style="left:599px;top:261px;width:1px;height:470px;background:#f0f0f0"></div>
<div class="abs" style="left:694px;top:219px;width:1px;height:41px;background:#f0f0f0"></div><div class="abs" style="left:694px;top:261px;width:1px;height:470px;background:#f0f0f0"></div>
<div class="abs" style="left:815px;top:219px;width:1px;height:41px;background:#f0f0f0"></div><div class="abs" style="left:815px;top:261px;width:1px;height:470px;background:#f0f0f0"></div>
<div class="abs" style="left:910px;top:219px;width:1px;height:41px;background:#f0f0f0"></div><div class="abs" style="left:910px;top:261px;width:1px;height:470px;background:#f0f0f0"></div>
<div class="abs" style="left:1027px;top:219px;width:1px;height:41px;background:#f0f0f0"></div><div class="abs" style="left:1027px;top:261px;width:1px;height:470px;background:#f0f0f0"></div>
<div class="abs" style="left:1189px;top:219px;width:1px;height:41px;background:#f0f0f0"></div><div class="abs" style="left:1189px;top:261px;width:1px;height:470px;background:#f0f0f0"></div>
<div class="abs" style="left:1307px;top:219px;width:1px;height:41px;background:#f0f0f0"></div><div class="abs" style="left:1307px;top:261px;width:1px;height:470px;background:#f0f0f0"></div>
<div class="abs" style="left:1543px;top:219px;width:1px;height:41px;background:#f0f0f0"></div><div class="abs" style="left:1543px;top:261px;width:1px;height:470px;background:#f0f0f0"></div>
<div class="abs" style="left:1779px;top:219px;width:1px;height:41px;background:#f0f0f0"></div><div class="abs" style="left:1779px;top:261px;width:1px;height:470px;background:#f0f0f0"></div>
<div class="abs cb" style="left:272px;top:275px"></div>
<div class="abs" style="left:296px;top:261px;width:54px;height:46px;line-height:45px;text-align:center;color:#333;white-space:nowrap">32</div>
<div class="abs" style="left:350px;top:261px;width:132px;height:46px;line-height:45px;text-align:center;color:#333;white-space:nowrap">谢谢参与</div>
<div class="abs" style="left:694px;top:261px;width:121px;height:46px;line-height:45px;text-align:center;color:#333;white-space:nowrap">谢谢参与</div>
<div class="abs" style="left:815px;top:261px;width:95px;height:46px;line-height:45px;text-align:center;color:#333;white-space:nowrap">1</div>
<div class="abs" style="left:910px;top:261px;width:117px;height:46px;line-height:45px;text-align:center;color:#333;white-space:nowrap">1.00</div>
<div class="abs" style="left:1027px;top:261px;width:162px;height:46px;line-height:45px;text-align:center;color:#333;white-space:nowrap">1</div>
<div class="abs" style="left:1307px;top:261px;width:236px;height:46px;line-height:45px;text-align:center;color:#333;white-space:nowrap">2021-06-10 12:15:49</div>
<div class="abs" style="left:1543px;top:261px;width:236px;height:46px;line-height:45px;text-align:center;color:#333;white-space:nowrap">2021-06-10 12:15:49</div>
<svg class="abs" style="left:526px;top:269px" width="30" height="30" viewBox="0 0 30 30"><rect width="30" height="30" fill="#fff"/><path d="M8 1.5h13v4.5h-13z" fill="#3ccf62" opacity="0.85"/><ellipse cx="28" cy="3.5" rx="1.8" ry="2.3" fill="#e8453c"/><path d="M1.2 10 Q1.2 7.2 4 7.2 L25 7.2 Q27.8 7.2 27.8 10 L27.8 29 L1.2 29 Z" fill="#ef4632"/><rect x="2.5" y="7.2" width="24" height="3.5" fill="#d63a22"/><rect x="4" y="14" width="12.7" height="10.5" fill="#1fa0e4"/><rect x="4" y="23.5" width="12.7" height="1.5" fill="#b52a1c"/><ellipse cx="9.5" cy="20.3" rx="3" ry="4.4" fill="#f2c21b"/><rect x="14.5" y="18" width="12" height="5" fill="#d8d8d8" opacity="0.8"/></svg>
<svg class="abs" style="left:632px;top:269px" width="30" height="30" viewBox="0 0 30 30"><rect width="30" height="30" fill="#fff"/><path d="M8 1.5h13v4.5h-13z" fill="#3ccf62" opacity="0.85"/><ellipse cx="28" cy="3.5" rx="1.8" ry="2.3" fill="#e8453c"/><path d="M1.2 10 Q1.2 7.2 4 7.2 L25 7.2 Q27.8 7.2 27.8 10 L27.8 29 L1.2 29 Z" fill="#ef4632"/><rect x="2.5" y="7.2" width="24" height="3.5" fill="#d63a22"/><rect x="4" y="14" width="12.7" height="10.5" fill="#1fa0e4"/><rect x="4" y="23.5" width="12.7" height="1.5" fill="#b52a1c"/><ellipse cx="9.5" cy="20.3" rx="3" ry="4.4" fill="#f2c21b"/><rect x="14.5" y="18" width="12" height="5" fill="#d8d8d8" opacity="0.8"/></svg>
<div class="abs" style="left:1189px;top:261px;width:118px;height:46px;line-height:45px;text-align:center;white-space:nowrap"><span style="display:inline-block;width:11px;height:11px;border-radius:50%;background:#2c3e50;vertical-align:-1px"></span> <span style="color:#333">大奖</span></div>
<div class="abs" style="left:1812px;top:273px;width:22px;height:22px;background:#18bc9c;border-radius:3px"></div>
<svg class="abs" style="left:1817px;top:278px" width="11" height="11" viewBox="0 0 11 11"><path d="M0.3 10.7 L1 7.5 L7.5 1 L10 3.5 L3.5 10 Z" fill="#fff"/><path d="M8.2 0.3 Q9 -0.3 9.8 0.5 L10.5 1.2 Q11.2 2 10.7 2.8 Z" fill="#fff"/></svg>
<div class="abs" style="left:1838px;top:273px;width:21px;height:22px;background:#e74c3c;border-radius:3px"></div>
<svg class="abs" style="left:1844px;top:278px" width="9" height="11" viewBox="0 0 9 11"><path d="M2.88 1.5 Q2.88 0 4.05 0 L4.95 0 Q6.12 0 6.12 1.5 Z" fill="none" stroke="#fff" stroke-width="1.2"/><rect x="0" y="1.6" width="9" height="1.4" fill="#fff"/><path d="M0.9 3.4 L8.1 3.4 L7.6499999999999995 11 L1.3499999999999999 11 Z" fill="#fff"/><rect x="2.6999999999999997" y="4.6" width="0.9" height="5" fill="#e74c3c"/><rect x="4.05" y="4.6" width="0.9" height="5" fill="#e74c3c"/><rect x="5.3999999999999995" y="4.6" width="0.9" height="5" fill="#e74c3c"/></svg>
<div class="abs cb" style="left:272px;top:322px"></div>
<div class="abs" style="left:296px;top:308px;width:54px;height:46px;line-height:45px;text-align:center;color:#333;white-space:nowrap">31</div>
<div class="abs" style="left:350px;top:308px;width:132px;height:46px;line-height:45px;text-align:center;color:#333;white-space:nowrap">19元红包</div>
<div class="abs" style="left:694px;top:308px;width:121px;height:46px;line-height:45px;text-align:center;color:#333;white-space:nowrap">20元红包</div>
<div class="abs" style="left:815px;top:308px;width:95px;height:46px;line-height:45px;text-align:center;color:#333;white-space:nowrap">1</div>
<div class="abs" style="left:910px;top:308px;width:117px;height:46px;line-height:45px;text-align:center;color:#333;white-space:nowrap">20.00</div>
<div class="abs" style="left:1027px;top:308px;width:162px;height:46px;line-height:45px;text-align:center;color:#333;white-space:nowrap">19</div>
<div class="abs" style="left:1307px;top:308px;width:236px;height:46px;line-height:45px;text-align:center;color:#333;white-space:nowrap">2021-06-10 09:49:49</div>
<div class="abs" style="left:1543px;top:308px;width:236px;height:46px;line-height:45px;text-align:center;color:#333;white-space:nowrap">2021-06-10 15:52:12</div>
<svg class="abs" style="left:526px;top:316px" width="30" height="30" viewBox="0 0 30 30"><rect width="30" height="30" fill="#f4f4f4"/><rect x="4.6" y="2" width="20.8" height="26.6" rx="2" fill="#ff2a4a"/><path d="M4.6 4 L11 10 L4.6 10.5 Z M25.4 4 L19 10 L25.4 10.5 Z" fill="#e2092a"/><circle cx="15.2" cy="8.3" r="2.6" fill="#fbb03b"/><rect x="10" y="14.3" width="10.5" height="1" fill="#fff" opacity="0.7"/><rect x="4.6" y="20.3" width="20.8" height="2" fill="#3a3a3a"/><rect x="4.6" y="22.3" width="20.8" height="0.8" fill="#c0142e"/></svg>
<svg class="abs" style="left:632px;top:316px" width="30" height="30" viewBox="0 0 30 30"><rect width="30" height="30" fill="#f4f4f4"/><rect x="4.6" y="2" width="20.8" height="26.6" rx="2" fill="#ff2a4a"/><path d="M4.6 4 L11 10 L4.6 10.5 Z M25.4 4 L19 10 L25.4 10.5 Z" fill="#e2092a"/><circle cx="15.2" cy="8.3" r="2.6" fill="#fbb03b"/><rect x="10" y="14.3" width="10.5" height="1" fill="#fff" opacity="0.7"/><rect x="4.6" y="20.3" width="20.8" height="2" fill="#3a3a3a"/><rect x="4.6" y="22.3" width="20.8" height="0.8" fill="#c0142e"/></svg>
<div class="abs" style="left:1189px;top:308px;width:118px;height:46px;line-height:45px;text-align:center;white-space:nowrap"><span style="display:inline-block;width:11px;height:11px;border-radius:50%;background:#2c3e50;vertical-align:-1px"></span></div>
<div class="abs" style="left:1812px;top:320px;width:22px;height:22px;background:#18bc9c;border-radius:3px"></div>
<svg class="abs" style="left:1817px;top:325px" width="11" height="11" viewBox="0 0 11 11"><path d="M0.3 10.7 L1 7.5 L7.5 1 L10 3.5 L3.5 10 Z" fill="#fff"/><path d="M8.2 0.3 Q9 -0.3 9.8 0.5 L10.5 1.2 Q11.2 2 10.7 2.8 Z" fill="#fff"/></svg>
<div class="abs" style="left:1838px;top:320px;width:21px;height:22px;background:#e74c3c;border-radius:3px"></div>
<svg class="abs" style="left:1844px;top:325px" width="9" height="11" viewBox="0 0 9 11"><path d="M2.88 1.5 Q2.88 0 4.05 0 L4.95 0 Q6.12 0 6.12 1.5 Z" fill="none" stroke="#fff" stroke-width="1.2"/><rect x="0" y="1.6" width="9" height="1.4" fill="#fff"/><path d="M0.9 3.4 L8.1 3.4 L7.6499999999999995 11 L1.3499999999999999 11 Z" fill="#fff"/><rect x="2.6999999999999997" y="4.6" width="0.9" height="5" fill="#e74c3c"/><rect x="4.05" y="4.6" width="0.9" height="5" fill="#e74c3c"/><rect x="5.3999999999999995" y="4.6" width="0.9" height="5" fill="#e74c3c"/></svg>
<div class="abs cb" style="left:272px;top:369px"></div>
<div class="abs" style="left:296px;top:355px;width:54px;height:46px;line-height:45px;text-align:center;color:#333;white-space:nowrap">30</div>
<div class="abs" style="left:350px;top:355px;width:132px;height:46px;line-height:45px;text-align:center;color:#333;white-space:nowrap">15元红包</div>
<div class="abs" style="left:694px;top:355px;width:121px;height:46px;line-height:45px;text-align:center;color:#333;white-space:nowrap">15元红包</div>
<div class="abs" style="left:815px;top:355px;width:95px;height:46px;line-height:45px;text-align:center;color:#333;white-space:nowrap">1</div>
<div class="abs" style="left:910px;top:355px;width:117px;height:46px;line-height:45px;text-align:center;color:#333;white-space:nowrap">15.00</div>
<div class="abs" style="left:1027px;top:355px;width:162px;height:46px;line-height:45px;text-align:center;color:#333;white-space:nowrap">15</div>
<div class="abs" style="left:1307px;top:355px;width:236px;height:46px;line-height:45px;text-align:center;color:#333;white-space:nowrap">2021-06-10 09:48:29</div>
<div class="abs" style="left:1543px;top:355px;width:236px;height:46px;line-height:45px;text-align:center;color:#333;white-space:nowrap">2021-06-10 15:52:22</div>
<svg class="abs" style="left:526px;top:363px" width="30" height="30" viewBox="0 0 30 30"><rect width="30" height="30" fill="#f4f4f4"/><rect x="4.6" y="2" width="20.8" height="26.6" rx="2" fill="#ff2a4a"/><path d="M4.6 4 L11 10 L4.6 10.5 Z M25.4 4 L19 10 L25.4 10.5 Z" fill="#e2092a"/><circle cx="15.2" cy="8.3" r="2.6" fill="#fbb03b"/><rect x="10" y="14.3" width="10.5" height="1" fill="#fff" opacity="0.7"/><rect x="4.6" y="20.3" width="20.8" height="2" fill="#3a3a3a"/><rect x="4.6" y="22.3" width="20.8" height="0.8" fill="#c0142e"/></svg>
<svg class="abs" style="left:632px;top:363px" width="30" height="30" viewBox="0 0 30 30"><rect width="30" height="30" fill="#f4f4f4"/><rect x="4.6" y="2" width="20.8" height="26.6" rx="2" fill="#ff2a4a"/><path d="M4.6 4 L11 10 L4.6 10.5 Z M25.4 4 L19 10 L25.4 10.5 Z" fill="#e2092a"/><circle cx="15.2" cy="8.3" r="2.6" fill="#fbb03b"/><rect x="10" y="14.3" width="10.5" height="1" fill="#fff" opacity="0.7"/><rect x="4.6" y="20.3" width="20.8" height="2" fill="#3a3a3a"/><rect x="4.6" y="22.3" width="20.8" height="0.8" fill="#c0142e"/></svg>
<div class="abs" style="left:1189px;top:355px;width:118px;height:46px;line-height:45px;text-align:center;white-space:nowrap"><span style="display:inline-block;width:11px;height:11px;border-radius:50%;background:#2c3e50;vertical-align:-1px"></span></div>
<div class="abs" style="left:1812px;top:367px;width:22px;height:22px;background:#18bc9c;border-radius:3px"></div>
<svg class="abs" style="left:1817px;top:372px" width="11" height="11" viewBox="0 0 11 11"><path d="M0.3 10.7 L1 7.5 L7.5 1 L10 3.5 L3.5 10 Z" fill="#fff"/><path d="M8.2 0.3 Q9 -0.3 9.8 0.5 L10.5 1.2 Q11.2 2 10.7 2.8 Z" fill="#fff"/></svg>
<div class="abs" style="left:1838px;top:367px;width:21px;height:22px;background:#e74c3c;border-radius:3px"></div>
<svg class="abs" style="left:1844px;top:372px" width="9" height="11" viewBox="0 0 9 11"><path d="M2.88 1.5 Q2.88 0 4.05 0 L4.95 0 Q6.12 0 6.12 1.5 Z" fill="none" stroke="#fff" stroke-width="1.2"/><rect x="0" y="1.6" width="9" height="1.4" fill="#fff"/><path d="M0.9 3.4 L8.1 3.4 L7.6499999999999995 11 L1.3499999999999999 11 Z" fill="#fff"/><rect x="2.6999999999999997" y="4.6" width="0.9" height="5" fill="#e74c3c"/><rect x="4.05" y="4.6" width="0.9" height="5" fill="#e74c3c"/><rect x="5.3999999999999995" y="4.6" width="0.9" height="5" fill="#e74c3c"/></svg>
<div class="abs cb" style="left:272px;top:416px"></div>
<div class="abs" style="left:296px;top:402px;width:54px;height:46px;line-height:45px;text-align:center;color:#333;white-space:nowrap">29</div>
<div class="abs" style="left:350px;top:402px;width:132px;height:46px;line-height:45px;text-align:center;color:#333;white-space:nowrap">13元红包</div>
<div class="abs" style="left:694px;top:402px;width:121px;height:46px;line-height:45px;text-align:center;color:#333;white-space:nowrap">13元红包</div>
<div class="abs" style="left:815px;top:402px;width:95px;height:46px;line-height:45px;text-align:center;color:#333;white-space:nowrap">2</div>
<div class="abs" style="left:910px;top:402px;width:117px;height:46px;line-height:45px;text-align:center;color:#333;white-space:nowrap">13.00</div>
<div class="abs" style="left:1027px;top:402px;width:162px;height:46px;line-height:45px;text-align:center;color:#333;white-space:nowrap">13</div>
<div class="abs" style="left:1307px;top:402px;width:236px;height:46px;line-height:45px;text-align:center;color:#333;white-space:nowrap">2021-06-10 09:46:59</div>
<div class="abs" style="left:1543px;top:402px;width:236px;height:46px;line-height:45px;text-align:center;color:#333;white-space:nowrap">2021-06-10 15:52:22</div>
<svg class="abs" style="left:526px;top:410px" width="30" height="30" viewBox="0 0 30 30"><rect width="30" height="30" fill="#f4f4f4"/><rect x="4.6" y="2" width="20.8" height="26.6" rx="2" fill="#ff2a4a"/><path d="M4.6 4 L11 10 L4.6 10.5 Z M25.4 4 L19 10 L25.4 10.5 Z" fill="#e2092a"/><circle cx="15.2" cy="8.3" r="2.6" fill="#fbb03b"/><rect x="10" y="14.3" width="10.5" height="1" fill="#fff" opacity="0.7"/><rect x="4.6" y="20.3" width="20.8" height="2" fill="#3a3a3a"/><rect x="4.6" y="22.3" width="20.8" height="0.8" fill="#c0142e"/></svg>
<svg class="abs" style="left:632px;top:410px" width="30" height="30" viewBox="0 0 30 30"><rect width="30" height="30" fill="#f4f4f4"/><rect x="4.6" y="2" width="20.8" height="26.6" rx="2" fill="#ff2a4a"/><path d="M4.6 4 L11 10 L4.6 10.5 Z M25.4 4 L19 10 L25.4 10.5 Z" fill="#e2092a"/><circle cx="15.2" cy="8.3" r="2.6" fill="#fbb03b"/><rect x="10" y="14.3" width="10.5" height="1" fill="#fff" opacity="0.7"/><rect x="4.6" y="20.3" width="20.8" height="2" fill="#3a3a3a"/><rect x="4.6" y="22.3" width="20.8" height="0.8" fill="#c0142e"/></svg>
<div class="abs" style="left:1189px;top:402px;width:118px;height:46px;line-height:45px;text-align:center;white-space:nowrap"><span style="display:inline-block;width:11px;height:11px;border-radius:50%;background:#2c3e50;vertical-align:-1px"></span></div>
<div class="abs" style="left:1812px;top:414px;width:22px;height:22px;background:#18bc9c;border-radius:3px"></div>
<svg class="abs" style="left:1817px;top:419px" width="11" height="11" viewBox="0 0 11 11"><path d="M0.3 10.7 L1 7.5 L7.5 1 L10 3.5 L3.5 10 Z" fill="#fff"/><path d="M8.2 0.3 Q9 -0.3 9.8 0.5 L10.5 1.2 Q11.2 2 10.7 2.8 Z" fill="#fff"/></svg>
<div class="abs" style="left:1838px;top:414px;width:21px;height:22px;background:#e74c3c;border-radius:3px"></div>
<svg class="abs" style="left:1844px;top:419px" width="9" height="11" viewBox="0 0 9 11"><path d="M2.88 1.5 Q2.88 0 4.05 0 L4.95 0 Q6.12 0 6.12 1.5 Z" fill="none" stroke="#fff" stroke-width="1.2"/><rect x="0" y="1.6" width="9" height="1.4" fill="#fff"/><path d="M0.9 3.4 L8.1 3.4 L7.6499999999999995 11 L1.3499999999999999 11 Z" fill="#fff"/><rect x="2.6999999999999997" y="4.6" width="0.9" height="5" fill="#e74c3c"/><rect x="4.05" y="4.6" width="0.9" height="5" fill="#e74c3c"/><rect x="5.3999999999999995" y="4.6" width="0.9" height="5" fill="#e74c3c"/></svg>
<div class="abs cb" style="left:272px;top:463px"></div>
<div class="abs" style="left:296px;top:449px;width:54px;height:46px;line-height:45px;text-align:center;color:#333;white-space:nowrap">28</div>
<div class="abs" style="left:350px;top:449px;width:132px;height:46px;line-height:45px;text-align:center;color:#333;white-space:nowrap">抽纸一包</div>
<div class="abs" style="left:694px;top:449px;width:121px;height:46px;line-height:45px;text-align:center;color:#333;white-space:nowrap">抽纸一包</div>
<div class="abs" style="left:815px;top:449px;width:95px;height:46px;line-height:45px;text-align:center;color:#333;white-space:nowrap">1</div>
<div class="abs" style="left:910px;top:449px;width:117px;height:46px;line-height:45px;text-align:center;color:#333;white-space:nowrap">6.00</div>
<div class="abs" style="left:1027px;top:449px;width:162px;height:46px;line-height:45px;text-align:center;color:#333;white-space:nowrap">6</div>
<div class="abs" style="left:1307px;top:449px;width:236px;height:46px;line-height:45px;text-align:center;color:#333;white-space:nowrap">2021-06-10 02:12:57</div>
<div class="abs" style="left:1543px;top:449px;width:236px;height:46px;line-height:45px;text-align:center;color:#333;white-space:nowrap">2021-06-10 09:50:24</div>
<svg class="abs" style="left:526px;top:457px" width="30" height="30" viewBox="0 0 30 30"><rect width="30" height="30" fill="#fff"/><path d="M2.5 4.5 L7 3 L11.5 3.5 L13 1 L16 1.5 L19 3 L25 3.5 L23 9.5 L6 10 Z" fill="#eadfbf"/><path d="M8 4 L10 9 M14 2 L13.5 9 M19 4 L18 9" stroke="#d8c89a" stroke-width="0.6"/><rect x="2.5" y="9" width="3" height="11" fill="#f6cfe0"/><rect x="5" y="8.5" width="22.5" height="12" rx="1" fill="#4aa06b"/><rect x="9" y="13.5" width="15" height="2.2" fill="#d2e8d8" opacity="0.55"/></svg>
<svg class="abs" style="left:632px;top:457px" width="30" height="30" viewBox="0 0 30 30"><rect width="30" height="30" fill="#fff"/><path d="M1.5 13 L4.5 12 L4.5 24 L1.5 23 Z" fill="#f6cfe0"/><path d="M3.5 12 L9 10.5 L28 11.5 L28 14 L21.5 16 L21.5 25 L4 24 Z" fill="#4aa06b"/><path d="M21.5 16 L28 14 L28 23.5 L21.5 25 Z" fill="#e6d6bc"/><rect x="8" y="17" width="11" height="2" fill="#d2e8d8" opacity="0.55"/></svg>
<div class="abs" style="left:1189px;top:449px;width:118px;height:46px;line-height:45px;text-align:center;white-space:nowrap"><span style="display:inline-block;width:11px;height:11px;border-radius:50%;background:#18bc9c;vertical-align:-1px"></span> <span style="color:#18bc9c">小奖</span></div>
<div class="abs" style="left:1812px;top:461px;width:22px;height:22px;background:#18bc9c;border-radius:3px"></div>
<svg class="abs" style="left:1817px;top:466px" width="11" height="11" viewBox="0 0 11 11"><path d="M0.3 10.7 L1 7.5 L7.5 1 L10 3.5 L3.5 10 Z" fill="#fff"/><path d="M8.2 0.3 Q9 -0.3 9.8 0.5 L10.5 1.2 Q11.2 2 10.7 2.8 Z" fill="#fff"/></svg>
<div class="abs" style="left:1838px;top:461px;width:21px;height:22px;background:#e74c3c;border-radius:3px"></div>
<svg class="abs" style="left:1844px;top:466px" width="9" height="11" viewBox="0 0 9 11"><path d="M2.88 1.5 Q2.88 0 4.05 0 L4.95 0 Q6.12 0 6.12 1.5 Z" fill="none" stroke="#fff" stroke-width="1.2"/><rect x="0" y="1.6" width="9" height="1.4" fill="#fff"/><path d="M0.9 3.4 L8.1 3.4 L7.6499999999999995 11 L1.3499999999999999 11 Z" fill="#fff"/><rect x="2.6999999999999997" y="4.6" width="0.9" height="5" fill="#e74c3c"/><rect x="4.05" y="4.6" width="0.9" height="5" fill="#e74c3c"/><rect x="5.3999999999999995" y="4.6" width="0.9" height="5" fill="#e74c3c"/></svg>
<div class="abs cb" style="left:272px;top:510px"></div>
<div class="abs" style="left:296px;top:496px;width:54px;height:46px;line-height:45px;text-align:center;color:#333;white-space:nowrap">25</div>
<div class="abs" style="left:350px;top:496px;width:132px;height:46px;line-height:45px;text-align:center;color:#333;white-space:nowrap">6元红包</div>
<div class="abs" style="left:694px;top:496px;width:121px;height:46px;line-height:45px;text-align:center;color:#333;white-space:nowrap">6元红包</div>
<div class="abs" style="left:815px;top:496px;width:95px;height:46px;line-height:45px;text-align:center;color:#333;white-space:nowrap">1</div>
<div class="abs" style="left:910px;top:496px;width:117px;height:46px;line-height:45px;text-align:center;color:#333;white-space:nowrap">6.00</div>
<div class="abs" style="left:1027px;top:496px;width:162px;height:46px;line-height:45px;text-align:center;color:#333;white-space:nowrap">6</div>
<div class="abs" style="left:1307px;top:496px;width:236px;height:46px;line-height:45px;text-align:center;color:#333;white-space:nowrap">2021-06-09 21:56:15</div>
<div class="abs" style="left:1543px;top:496px;width:236px;height:46px;line-height:45px;text-align:center;color:#333;white-space:nowrap">2021-06-09 23:31:22</div>
<svg class="abs" style="left:526px;top:504px" width="30" height="30" viewBox="0 0 30 30"><rect width="30" height="30" fill="#d63d35"/><path d="M0 0 H30 V10 Q15 15.5 0 10 Z" fill="#ff5050"/><circle cx="15" cy="14" r="6.1" fill="#fdd84a"/><path d="M13 11.5 L15 14 L17 11.5 M12.5 14.5 H17.5 M15 14 V17" stroke="#e2a93a" stroke-width="1.1" fill="none"/><rect x="13" y="18.5" width="4" height="1.3" fill="#f28a5a"/><rect x="14" y="2.5" width="2" height="3" fill="#f7b8a8" opacity="0.7"/><rect x="0" y="23.5" width="30" height="3.2" fill="#1a1a1a"/><rect x="1" y="24.6" width="28" height="1" fill="#bbb" opacity="0.6"/></svg>
<svg class="abs" style="left:632px;top:504px" width="30" height="30" viewBox="0 0 30 30"><rect width="30" height="30" fill="#d63d35"/><path d="M0 0 H30 V10 Q15 15.5 0 10 Z" fill="#ff5050"/><circle cx="15" cy="14" r="6.1" fill="#fdd84a"/><path d="M13 11.5 L15 14 L17 11.5 M12.5 14.5 H17.5 M15 14 V17" stroke="#e2a93a" stroke-width="1.1" fill="none"/><rect x="13" y="18.5" width="4" height="1.3" fill="#f28a5a"/><rect x="14" y="2.5" width="2" height="3" fill="#f7b8a8" opacity="0.7"/><rect x="0" y="23.5" width="30" height="3.2" fill="#1a1a1a"/><rect x="1" y="24.6" width="28" height="1" fill="#bbb" opacity="0.6"/></svg>
<div class="abs" style="left:1189px;top:496px;width:118px;height:46px;line-height:45px;text-align:center;white-space:nowrap"><span style="display:inline-block;width:11px;height:11px;border-radius:50%;background:#2c3e50;vertical-align:-1px"></span></div>
<div class="abs" style="left:1812px;top:508px;width:22px;height:22px;background:#18bc9c;border-radius:3px"></div>
<svg class="abs" style="left:1817px;top:513px" width="11" height="11" viewBox="0 0 11 11"><path d="M0.3 10.7 L1 7.5 L7.5 1 L10 3.5 L3.5 10 Z" fill="#fff"/><path d="M8.2 0.3 Q9 -0.3 9.8 0.5 L10.5 1.2 Q11.2 2 10.7 2.8 Z" fill="#fff"/></svg>
<div class="abs" style="left:1838px;top:508px;width:21px;height:22px;background:#e74c3c;border-radius:3px"></div>
<svg class="abs" style="left:1844px;top:513px" width="9" height="11" viewBox="0 0 9 11"><path d="M2.88 1.5 Q2.88 0 4.05 0 L4.95 0 Q6.12 0 6.12 1.5 Z" fill="none" stroke="#fff" stroke-width="1.2"/><rect x="0" y="1.6" width="9" height="1.4" fill="#fff"/><path d="M0.9 3.4 L8.1 3.4 L7.6499999999999995 11 L1.3499999999999999 11 Z" fill="#fff"/><rect x="2.6999999999999997" y="4.6" width="0.9" height="5" fill="#e74c3c"/><rect x="4.05" y="4.6" width="0.9" height="5" fill="#e74c3c"/><rect x="5.3999999999999995" y="4.6" width="0.9" height="5" fill="#e74c3c"/></svg>
<div class="abs cb" style="left:272px;top:557px"></div>
<div class="abs" style="left:296px;top:543px;width:54px;height:46px;line-height:45px;text-align:center;color:#333;white-space:nowrap">24</div>
<div class="abs" style="left:350px;top:543px;width:132px;height:46px;line-height:45px;text-align:center;color:#333;white-space:nowrap">2元红包</div>
<div class="abs" style="left:694px;top:543px;width:121px;height:46px;line-height:45px;text-align:center;color:#333;white-space:nowrap">2元红包</div>
<div class="abs" style="left:815px;top:543px;width:95px;height:46px;line-height:45px;text-align:center;color:#333;white-space:nowrap">1</div>
<div class="abs" style="left:910px;top:543px;width:117px;height:46px;line-height:45px;text-align:center;color:#333;white-space:nowrap">2.00</div>
<div class="abs" style="left:1027px;top:543px;width:162px;height:46px;line-height:45px;text-align:center;color:#333;white-space:nowrap">2</div>
<div class="abs" style="left:1307px;top:543px;width:236px;height:46px;line-height:45px;text-align:center;color:#333;white-space:nowrap">2021-06-09 21:33:33</div>
<div class="abs" style="left:1543px;top:543px;width:236px;height:46px;line-height:45px;text-align:center;color:#333;white-space:nowrap">2021-06-09 23:31:48</div>
<svg class="abs" style="left:526px;top:551px" width="30" height="30" viewBox="0 0 30 30"><rect width="30" height="30" fill="#d63d35"/><path d="M0 0 H30 V10 Q15 15.5 0 10 Z" fill="#ff5050"/><circle cx="15" cy="14" r="6.1" fill="#fdd84a"/><path d="M13 11.5 L15 14 L17 11.5 M12.5 14.5 H17.5 M15 14 V17" stroke="#e2a93a" stroke-width="1.1" fill="none"/><rect x="13" y="18.5" width="4" height="1.3" fill="#f28a5a"/><rect x="14" y="2.5" width="2" height="3" fill="#f7b8a8" opacity="0.7"/><rect x="0" y="23.5" width="30" height="3.2" fill="#1a1a1a"/><rect x="1" y="24.6" width="28" height="1" fill="#bbb" opacity="0.6"/></svg>
<svg class="abs" style="left:632px;top:551px" width="30" height="30" viewBox="0 0 30 30"><rect width="30" height="30" fill="#d63d35"/><path d="M0 0 H30 V10 Q15 15.5 0 10 Z" fill="#ff5050"/><circle cx="15" cy="14" r="6.1" fill="#fdd84a"/><path d="M13 11.5 L15 14 L17 11.5 M12.5 14.5 H17.5 M15 14 V17" stroke="#e2a93a" stroke-width="1.1" fill="none"/><rect x="13" y="18.5" width="4" height="1.3" fill="#f28a5a"/><rect x="14" y="2.5" width="2" height="3" fill="#f7b8a8" opacity="0.7"/><rect x="0" y="23.5" width="30" height="3.2" fill="#1a1a1a"/><rect x="1" y="24.6" width="28" height="1" fill="#bbb" opacity="0.6"/></svg>
<div class="abs" style="left:1189px;top:543px;width:118px;height:46px;line-height:45px;text-align:center;white-space:nowrap"><span style="display:inline-block;width:11px;height:11px;border-radius:50%;background:#2c3e50;vertical-align:-1px"></span></div>
<div class="abs" style="left:1812px;top:555px;width:22px;height:22px;background:#18bc9c;border-radius:3px"></div>
<svg class="abs" style="left:1817px;top:560px" width="11" height="11" viewBox="0 0 11 11"><path d="M0.3 10.7 L1 7.5 L7.5 1 L10 3.5 L3.5 10 Z" fill="#fff"/><path d="M8.2 0.3 Q9 -0.3 9.8 0.5 L10.5 1.2 Q11.2 2 10.7 2.8 Z" fill="#fff"/></svg>
<div class="abs" style="left:1838px;top:555px;width:21px;height:22px;background:#e74c3c;border-radius:3px"></div>
<svg class="abs" style="left:1844px;top:560px" width="9" height="11" viewBox="0 0 9 11"><path d="M2.88 1.5 Q2.88 0 4.05 0 L4.95 0 Q6.12 0 6.12 1.5 Z" fill="none" stroke="#fff" stroke-width="1.2"/><rect x="0" y="1.6" width="9" height="1.4" fill="#fff"/><path d="M0.9 3.4 L8.1 3.4 L7.6499999999999995 11 L1.3499999999999999 11 Z" fill="#fff"/><rect x="2.6999999999999997" y="4.6" width="0.9" height="5" fill="#e74c3c"/><rect x="4.05" y="4.6" width="0.9" height="5" fill="#e74c3c"/><rect x="5.3999999999999995" y="4.6" width="0.9" height="5" fill="#e74c3c"/></svg>
<div class="abs cb" style="left:272px;top:604px"></div>
<div class="abs" style="left:296px;top:590px;width:54px;height:46px;line-height:45px;text-align:center;color:#333;white-space:nowrap">23</div>
<div class="abs" style="left:350px;top:590px;width:132px;height:46px;line-height:45px;text-align:center;color:#333;white-space:nowrap">1元红包</div>
<div class="abs" style="left:694px;top:590px;width:121px;height:46px;line-height:45px;text-align:center;color:#333;white-space:nowrap">1元红包</div>
<div class="abs" style="left:815px;top:590px;width:95px;height:46px;line-height:45px;text-align:center;color:#333;white-space:nowrap">1</div>
<div class="abs" style="left:910px;top:590px;width:117px;height:46px;line-height:45px;text-align:center;color:#333;white-space:nowrap">1.00</div>
<div class="abs" style="left:1027px;top:590px;width:162px;height:46px;line-height:45px;text-align:center;color:#333;white-space:nowrap">1</div>
<div class="abs" style="left:1307px;top:590px;width:236px;height:46px;line-height:45px;text-align:center;color:#333;white-space:nowrap">2021-06-09 21:26:05</div>
<div class="abs" style="left:1543px;top:590px;width:236px;height:46px;line-height:45px;text-align:center;color:#333;white-space:nowrap">2021-06-09 23:31:48</div>
<svg class="abs" style="left:526px;top:598px" width="30" height="30" viewBox="0 0 30 30"><rect width="30" height="30" fill="#d63d35"/><path d="M0 0 H30 V10 Q15 15.5 0 10 Z" fill="#ff5050"/><circle cx="15" cy="14" r="6.1" fill="#fdd84a"/><path d="M13 11.5 L15 14 L17 11.5 M12.5 14.5 H17.5 M15 14 V17" stroke="#e2a93a" stroke-width="1.1" fill="none"/><rect x="13" y="18.5" width="4" height="1.3" fill="#f28a5a"/><rect x="14" y="2.5" width="2" height="3" fill="#f7b8a8" opacity="0.7"/><rect x="0" y="23.5" width="30" height="3.2" fill="#1a1a1a"/><rect x="1" y="24.6" width="28" height="1" fill="#bbb" opacity="0.6"/></svg>
<svg class="abs" style="left:632px;top:598px" width="30" height="30" viewBox="0 0 30 30"><rect width="30" height="30" fill="#d63d35"/><path d="M0 0 H30 V10 Q15 15.5 0 10 Z" fill="#ff5050"/><circle cx="15" cy="14" r="6.1" fill="#fdd84a"/><path d="M13 11.5 L15 14 L17 11.5 M12.5 14.5 H17.5 M15 14 V17" stroke="#e2a93a" stroke-width="1.1" fill="none"/><rect x="13" y="18.5" width="4" height="1.3" fill="#f28a5a"/><rect x="14" y="2.5" width="2" height="3" fill="#f7b8a8" opacity="0.7"/><rect x="0" y="23.5" width="30" height="3.2" fill="#1a1a1a"/><rect x="1" y="24.6" width="28" height="1" fill="#bbb" opacity="0.6"/></svg>
<div class="abs" style="left:1189px;top:590px;width:118px;height:46px;line-height:45px;text-align:center;white-space:nowrap"><span style="display:inline-block;width:11px;height:11px;border-radius:50%;background:#2c3e50;vertical-align:-1px"></span></div>
<div class="abs" style="left:1812px;top:602px;width:22px;height:22px;background:#18bc9c;border-radius:3px"></div>
<svg class="abs" style="left:1817px;top:607px" width="11" height="11" viewBox="0 0 11 11"><path d="M0.3 10.7 L1 7.5 L7.5 1 L10 3.5 L3.5 10 Z" fill="#fff"/><path d="M8.2 0.3 Q9 -0.3 9.8 0.5 L10.5 1.2 Q11.2 2 10.7 2.8 Z" fill="#fff"/></svg>
<div class="abs" style="left:1838px;top:602px;width:21px;height:22px;background:#e74c3c;border-radius:3px"></div>
<svg class="abs" style="left:1844px;top:607px" width="9" height="11" viewBox="0 0 9 11"><path d="M2.88 1.5 Q2.88 0 4.05 0 L4.95 0 Q6.12 0 6.12 1.5 Z" fill="none" stroke="#fff" stroke-width="1.2"/><rect x="0" y="1.6" width="9" height="1.4" fill="#fff"/><path d="M0.9 3.4 L8.1 3.4 L7.6499999999999995 11 L1.3499999999999999 11 Z" fill="#fff"/><rect x="2.6999999999999997" y="4.6" width="0.9" height="5" fill="#e74c3c"/><rect x="4.05" y="4.6" width="0.9" height="5" fill="#e74c3c"/><rect x="5.3999999999999995" y="4.6" width="0.9" height="5" fill="#e74c3c"/></svg>
<div class="abs cb" style="left:272px;top:651px"></div>
<div class="abs" style="left:296px;top:637px;width:54px;height:46px;line-height:45px;text-align:center;color:#333;white-space:nowrap">21</div>
<div class="abs" style="left:350px;top:637px;width:132px;height:46px;line-height:45px;text-align:center;color:#333;white-space:nowrap">88元红包</div>
<div class="abs" style="left:694px;top:637px;width:121px;height:46px;line-height:45px;text-align:center;color:#333;white-space:nowrap">现金红包</div>
<div class="abs" style="left:815px;top:637px;width:95px;height:46px;line-height:45px;text-align:center;color:#333;white-space:nowrap">1</div>
<div class="abs" style="left:910px;top:637px;width:117px;height:46px;line-height:45px;text-align:center;color:#333;white-space:nowrap">88.00</div>
<div class="abs" style="left:1027px;top:637px;width:162px;height:46px;line-height:45px;text-align:center;color:#333;white-space:nowrap">88</div>
<div class="abs" style="left:1307px;top:637px;width:236px;height:46px;line-height:45px;text-align:center;color:#333;white-space:nowrap">2021-06-09 18:43:57</div>
<div class="abs" style="left:1543px;top:637px;width:236px;height:46px;line-height:45px;text-align:center;color:#333;white-space:nowrap">2021-06-09 18:45:50</div>
<svg class="abs" style="left:526px;top:645px" width="30" height="30" viewBox="0 0 30 30"><rect width="30" height="30" fill="#d63d35"/><path d="M0 0 H30 V10 Q15 15.5 0 10 Z" fill="#ff5050"/><circle cx="15" cy="14" r="6.1" fill="#fdd84a"/><path d="M13 11.5 L15 14 L17 11.5 M12.5 14.5 H17.5 M15 14 V17" stroke="#e2a93a" stroke-width="1.1" fill="none"/><rect x="13.5" y="18.3" width="3" height="1.6" fill="#7d8c99"/></svg>
<svg class="abs" style="left:632px;top:645px" width="30" height="30" viewBox="0 0 30 30"><rect width="30" height="30" fill="#d63d35"/><path d="M0 0 H30 V10 Q15 15.5 0 10 Z" fill="#ff5050"/><circle cx="15" cy="14" r="6.1" fill="#fdd84a"/><path d="M13 11.5 L15 14 L17 11.5 M12.5 14.5 H17.5 M15 14 V17" stroke="#e2a93a" stroke-width="1.1" fill="none"/><rect x="13.5" y="18.3" width="3" height="1.6" fill="#7d8c99"/></svg>
<div class="abs" style="left:1189px;top:637px;width:118px;height:46px;line-height:45px;text-align:center;white-space:nowrap"><span style="display:inline-block;width:11px;height:11px;border-radius:50%;background:#2c3e50;vertical-align:-1px"></span> <span style="color:#333">大奖</span></div>
<div class="abs" style="left:1812px;top:649px;width:22px;height:22px;background:#18bc9c;border-radius:3px"></div>
<svg class="abs" style="left:1817px;top:654px" width="11" height="11" viewBox="0 0 11 11"><path d="M0.3 10.7 L1 7.5 L7.5 1 L10 3.5 L3.5 10 Z" fill="#fff"/><path d="M8.2 0.3 Q9 -0.3 9.8 0.5 L10.5 1.2 Q11.2 2 10.7 2.8 Z" fill="#fff"/></svg>
<div class="abs" style="left:1838px;top:649px;width:21px;height:22px;background:#e74c3c;border-radius:3px"></div>
<svg class="abs" style="left:1844px;top:654px" width="9" height="11" viewBox="0 0 9 11"><path d="M2.88 1.5 Q2.88 0 4.05 0 L4.95 0 Q6.12 0 6.12 1.5 Z" fill="none" stroke="#fff" stroke-width="1.2"/><rect x="0" y="1.6" width="9" height="1.4" fill="#fff"/><path d="M0.9 3.4 L8.1 3.4 L7.6499999999999995 11 L1.3499999999999999 11 Z" fill="#fff"/><rect x="2.6999999999999997" y="4.6" width="0.9" height="5" fill="#e74c3c"/><rect x="4.05" y="4.6" width="0.9" height="5" fill="#e74c3c"/><rect x="5.3999999999999995" y="4.6" width="0.9" height="5" fill="#e74c3c"/></svg>
<div class="abs cb" style="left:272px;top:698px"></div>
<div class="abs" style="left:296px;top:684px;width:54px;height:46px;line-height:45px;text-align:center;color:#333;white-space:nowrap">20</div>
<div class="abs" style="left:350px;top:684px;width:132px;height:46px;line-height:45px;text-align:center;color:#333;white-space:nowrap">188元红包</div>
<div class="abs" style="left:694px;top:684px;width:121px;height:46px;line-height:45px;text-align:center;color:#333;white-space:nowrap">现金红包</div>
<div class="abs" style="left:815px;top:684px;width:95px;height:46px;line-height:45px;text-align:center;color:#333;white-space:nowrap">1</div>
<div class="abs" style="left:910px;top:684px;width:117px;height:46px;line-height:45px;text-align:center;color:#333;white-space:nowrap">188.00</div>
<div class="abs" style="left:1027px;top:684px;width:162px;height:46px;line-height:45px;text-align:center;color:#333;white-space:nowrap">188</div>
<div class="abs" style="left:1307px;top:684px;width:236px;height:46px;line-height:45px;text-align:center;color:#333;white-space:nowrap">2021-06-09 18:38:54</div>
<div class="abs" style="left:1543px;top:684px;width:236px;height:46px;line-height:45px;text-align:center;color:#333;white-space:nowrap">2021-06-09 18:42:08</div>
<svg class="abs" style="left:526px;top:692px" width="30" height="30" viewBox="0 0 30 30"><rect width="30" height="30" fill="#d63d35"/><path d="M0 0 H30 V10 Q15 15.5 0 10 Z" fill="#ff5050"/><circle cx="15" cy="14" r="6.1" fill="#fdd84a"/><path d="M13 11.5 L15 14 L17 11.5 M12.5 14.5 H17.5 M15 14 V17" stroke="#e2a93a" stroke-width="1.1" fill="none"/><rect x="13.5" y="18.3" width="3" height="1.6" fill="#7d8c99"/></svg>
<svg class="abs" style="left:632px;top:692px" width="30" height="30" viewBox="0 0 30 30"><rect width="30" height="30" fill="#d63d35"/><path d="M0 0 H30 V10 Q15 15.5 0 10 Z" fill="#ff5050"/><circle cx="15" cy="14" r="6.1" fill="#fdd84a"/><path d="M13 11.5 L15 14 L17 11.5 M12.5 14.5 H17.5 M15 14 V17" stroke="#e2a93a" stroke-width="1.1" fill="none"/><rect x="13.5" y="18.3" width="3" height="1.6" fill="#7d8c99"/></svg>
<div class="abs" style="left:1189px;top:684px;width:118px;height:46px;line-height:45px;text-align:center;white-space:nowrap"><span style="display:inline-block;width:11px;height:11px;border-radius:50%;background:#2c3e50;vertical-align:-1px"></span> <span style="color:#333">大奖</span></div>
<div class="abs" style="left:1812px;top:696px;width:22px;height:22px;background:#18bc9c;border-radius:3px"></div>
<svg class="abs" style="left:1817px;top:701px" width="11" height="11" viewBox="0 0 11 11"><path d="M0.3 10.7 L1 7.5 L7.5 1 L10 3.5 L3.5 10 Z" fill="#fff"/><path d="M8.2 0.3 Q9 -0.3 9.8 0.5 L10.5 1.2 Q11.2 2 10.7 2.8 Z" fill="#fff"/></svg>
<div class="abs" style="left:1838px;top:696px;width:21px;height:22px;background:#e74c3c;border-radius:3px"></div>
<svg class="abs" style="left:1844px;top:701px" width="9" height="11" viewBox="0 0 9 11"><path d="M2.88 1.5 Q2.88 0 4.05 0 L4.95 0 Q6.12 0 6.12 1.5 Z" fill="none" stroke="#fff" stroke-width="1.2"/><rect x="0" y="1.6" width="9" height="1.4" fill="#fff"/><path d="M0.9 3.4 L8.1 3.4 L7.6499999999999995 11 L1.3499999999999999 11 Z" fill="#fff"/><rect x="2.6999999999999997" y="4.6" width="0.9" height="5" fill="#e74c3c"/><rect x="4.05" y="4.6" width="0.9" height="5" fill="#e74c3c"/><rect x="5.3999999999999995" y="4.6" width="0.9" height="5" fill="#e74c3c"/></svg>
<div class="abs" style="left:260px;top:730px;width:1632px;height:1px;background:#f0f0f0"></div>
<div class="abs t" style="left:260px;top:748px;color:#333;line-height:18px">显示第 1 到第 10 条记录，总共 17 条记录 每页显示</div>
<div class="abs" style="left:561px;top:743px;width:50px;height:31px;border:1px solid #ddd;border-radius:3px;background:#f4f4f4;line-height:29px;color:#333;font-size:12px;padding-left:11px">10</div>
<svg class="abs" style="left:590px;top:756px" width="8" height="4" viewBox="0 0 8 4"><path d="M0 4 L8 4 L4.0 0 Z" fill="#333"/></svg>
<div class="abs t" style="left:615px;top:748px;color:#333;line-height:18px">条记录</div>
<div class="abs" style="left:1589px;top:741px;width:193px;height:32px;border:1px solid #ddd;border-radius:3px;background:#fafafa"></div>
<div class="abs" style="left:1653px;top:741px;width:33px;height:32px;background:#2c3e50"></div>
<div class="abs" style="left:1717px;top:742px;width:1px;height:30px;background:#ddd"></div>
<div class="abs" style="left:1589px;top:741px;width:64px;height:32px;line-height:31px;text-align:center;color:#666">上一页</div>
<div class="abs" style="left:1653px;top:741px;width:33px;height:32px;line-height:31px;text-align:center;color:#fff">1</div>
<div class="abs" style="left:1686px;top:741px;width:32px;height:32px;line-height:31px;text-align:center;color:#666">2</div>
<div class="abs" style="left:1718px;top:741px;width:64px;height:32px;line-height:31px;text-align:center;color:#666">下一页</div>
<div class="abs" style="left:1787px;top:741px;width:50px;height:31px;border:1px solid #d2d6de;background:#fff"></div>
<div class="abs" style="left:1842px;top:742px;width:50px;height:31px;border:1px solid #ddd;border-radius:3px;background:#f4f4f4;line-height:29px;text-align:center;color:#333;font-size:12px">跳转</div>
</body></html>
